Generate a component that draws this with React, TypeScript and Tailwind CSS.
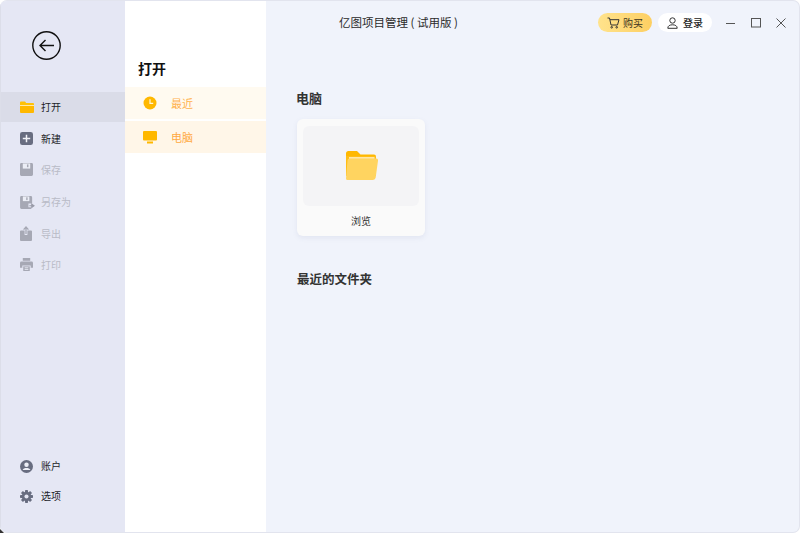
import React from "react";

const font = { fontFamily: '"Noto Sans CJK SC", "Liberation Sans", sans-serif' };

const FolderSmall = () => (
  <svg width="14" height="12" viewBox="0 0 14 12">
    <path d="M0 1.500A1 1 0 0 1 1 .5h4l1.200 1.500H13a1 1 0 0 1 1 1V4H0z" fill="#ffc107" />
    <path d="M0 4.600h14V11a1 1 0 0 1-1 1H1a1 1 0 0 1-1-1z" fill="#ffb800" />
    <rect x="0" y="4" width="14" height="1" fill="#ffe9a8" />
  </svg>
);
const Plus = () => (
  <svg width="13" height="13" viewBox="0 0 14 14">
    <rect width="14" height="14" rx="2.500" fill="#686d80" />
    <path d="M7 3v8M3 7h8" stroke="#f2f3f8" strokeWidth="1.600" />
  </svg>
);
const Save = () => (
  <svg width="13" height="13" viewBox="0 0 14 14">
    <path d="M1.500 0h11A1.500 1.500 0 0 1 14 1.500v11a1.500 1.500 0 0 1-1.500 1.500h-11A1.500 1.500 0 0 1 0 12.500v-11A1.500 1.500 0 0 1 1.500 0z" fill="#a6a8b4" />
    <rect x="3" y="0.500" width="8" height="5.500" fill="#eceef6" />
    <rect x="7.500" y="1.500" width="1.600" height="3" fill="#a6a8b4" />
  </svg>
);
const SaveAs = () => (
  <svg width="15" height="13" viewBox="0 0 16 14">
    <path d="M1.500 0h10A1.500 1.500 0 0 1 13 1.500V8H9v4H12v2H1.500A1.500 1.500 0 0 1 0 12.500v-11A1.500 1.500 0 0 1 1.500 0z" fill="#a6a8b4" />
    <rect x="3" y="0.500" width="7" height="5" fill="#eceef6" />
    <rect x="6.600" y="1.400" width="1.500" height="3" fill="#a6a8b4" />
    <path d="M10 10.500h3.500M12.600 8.800l2.400 1.700-2.400 1.700z" stroke="#9a9ca9" strokeWidth="1.200" fill="#9a9ca9" />
  </svg>
);
const Export = () => (
  <svg width="12" height="15" viewBox="0 0 12 15">
    <path d="M1 4.500h3.600V9h2.800V4.500H11a1 1 0 0 1 1 1V14a1 1 0 0 1-1 1H1a1 1 0 0 1-1-1V5.500a1 1 0 0 1 1-1z" fill="#a6a8b4" />
    <path d="M6 8V1.500M3.600 3.600 6 1l2.400 2.600" stroke="#a6a8b4" strokeWidth="1.300" fill="none" />
  </svg>
);
const Printer = () => (
  <svg width="13" height="13" viewBox="0 0 14 14">
    <path d="M3 0h8v3H3z" fill="#a6a8b4" />
    <path d="M1.500 3.800h11A1.500 1.500 0 0 1 14 5.300V10.500h-2.500V8h-9v2.500H0V5.300a1.500 1.500 0 0 1 1.500-1.500z" fill="#a6a8b4" />
    <path d="M3.500 9h7v5h-7z" fill="#a6a8b4" />
    <path d="M5 10.500h4M5 12.300h4" stroke="#eceef6" strokeWidth="0.900" />
  </svg>
);
const Account = () => (
  <svg width="13" height="13" viewBox="0 0 14 14">
    <circle cx="7" cy="7" r="7" fill="#686d80" />
    <circle cx="7" cy="5.200" r="2.400" fill="#eceef6" />
    <path d="M2.800 10.800C3.500 9 5 8.500 7 8.500s3.500.5 4.200 2.300z" fill="#eceef6" />
  </svg>
);
const Gear = () => (
  <svg width="13" height="13" viewBox="0 0 14 14">
    <g fill="#686d80">
      {[0, 45, 90, 135].map((a) => (
        <rect key={a} x="5.400" y="0" width="3.200" height="14" rx="0.800" transform={`rotate(${a} 7 7)`} />
      ))}
      <circle cx="7" cy="7" r="5" />
    </g>
    <circle cx="7" cy="7" r="2.200" fill="#e5e7f4" />
  </svg>
);
const Clock = () => (
  <svg width="14" height="14" viewBox="0 0 14 14">
    <circle cx="7" cy="7" r="6.500" fill="#ffb800" />
    <path d="M7 3.300V7.300h3.200" stroke="#fff6de" strokeWidth="1.200" fill="none" />
  </svg>
);
const Monitor = () => (
  <svg width="14" height="13" viewBox="0 0 14 13">
    <rect width="14" height="9.500" rx="1" fill="#ffb800" />
    <rect x="4" y="10.500" width="6" height="2" fill="#ffb800" />
  </svg>
);
const BigFolder = () => (
  <svg width="32" height="29" viewBox="0 0 32 29">
    <path d="M0 2.500A2.500 2.500 0 0 1 2.500 0h8.500l3.500 3.500H28a2 2 0 0 1 2 2V10H0z" fill="#ffb800" />
    <path d="M0 5h30v20H0z" fill="#ffbe16" />
    <path d="M3 6h25.500v6H3z" fill="#ffe6a6" />
    <path d="M3.500 7.500H30a2 2 0 0 1 2 2.300l-2.300 16.600A3 3 0 0 1 27 29H1.500a1.500 1.500 0 0 1-1.500-1.500L1.500 9.300a2 2 0 0 1 2-1.800z" fill="#ffd460" />
  </svg>
);

const Side = ({ icon, label, dim, active, className = "" }: { icon: React.ReactNode; label: string; dim?: boolean; active?: boolean; className?: string }) => (
  <div className={`flex items-center pl-[19px] ${active ? "bg-[#dadce8]" : ""} ${className}`}>
    <div className="flex w-[21px] shrink-0 items-center">{icon}</div>
    <span className={`text-[10px] leading-[14px] ${dim ? "text-[#b9bbc6]" : "text-[#1c1e28]"}`}>{label}</span>
  </div>
);

export default function App() {
  return (
    <div className="relative h-[533px] w-[800px]">
      <div className="flex h-full w-full overflow-hidden rounded-[7px] border-b border-r border-t border-[#e2e4ee] bg-[#f0f3fb]" style={font}>
        <aside className="flex w-[125px] shrink-0 flex-col border-l border-[#dcdee9] bg-[#e5e7f4]">
          <div className="flex h-[91px] items-start pl-[31px] pt-[30px]">
            <svg width="29" height="29" viewBox="0 0 29 29" fill="none" stroke="#111" strokeWidth="1.400">
              <circle cx="14.500" cy="14.500" r="13.700" />
              <path d="M22 14.500H8M13.500 9l-5.500 5.500 5.500 5.500" />
            </svg>
          </div>
          <Side active className="h-[30px]" icon={<FolderSmall />} label="打开" />
          <Side className="mt-[1px] h-[31px]" icon={<Plus />} label="新建" />
          <Side dim className="h-[31px]" icon={<Save />} label="保存" />
          <Side dim className="mt-[1px] h-[32px]" icon={<SaveAs />} label="另存为" />
          <Side dim className="h-[31px]" icon={<Export />} label="导出" />
          <Side dim className="h-[31px]" icon={<Printer />} label="打印" />
          <div className="mt-auto pb-[21px]">
            <Side className="h-[30px]" icon={<Account />} label="账户" />
            <Side className="h-[30px]" icon={<Gear />} label="选项" />
          </div>
        </aside>

        <nav className="flex w-[141px] shrink-0 flex-col bg-white">
          <h2 className="flex h-[86px] items-end pb-[9px] pl-[13px] text-[14px] font-bold leading-[20px] text-[#111]">打开</h2>
          <div className="flex h-[32px] items-center bg-[#fffaf0] pl-[18px]">
            <Clock />
            <span className="ml-[14px] text-[11px] text-[#ffb14d]">最近</span>
          </div>
          <div className="mt-[2px] flex h-[32px] items-center bg-[#fff6e8] pl-[18px]">
            <Monitor />
            <span className="ml-[14px] text-[11px] text-[#ffa940]">电脑</span>
          </div>
        </nav>

        <main className="flex min-w-0 flex-1 flex-col">
          <header className="flex h-[43px] items-center">
            <div className="w-[73px] shrink-0" />
            <div className="w-[120px] shrink-0 whitespace-pre text-[11.500px] text-[#2a2a2a]">亿图项目管理 ( 试用版 )</div>
            <div className="ml-[139px] flex h-[19px] w-[54px] items-center justify-center gap-[3px] rounded-full bg-gradient-to-r from-[#ffe38c] to-[#fdcf62] text-[10px] text-[#3a3320]">
              <svg width="13" height="12" viewBox="0 0 13 12" fill="none" stroke="#333" strokeWidth="1">
                <path d="M.5 1h2l1.500 7h6.500l1.500-5.300H3" />
                <circle cx="4.700" cy="10.300" r=".8" />
                <circle cx="9.700" cy="10.300" r=".8" />
              </svg>
              <span>购买</span>
            </div>
            <div className="ml-[6px] flex h-[19px] w-[54px] items-center justify-center gap-[5px] rounded-full bg-white text-[10px] font-medium text-[#222]">
              <svg width="11" height="12" viewBox="0 0 11 12" fill="none" stroke="#333" strokeWidth="1">
                <circle cx="5.500" cy="3.500" r="2.700" />
                <path d="M.8 11.300c0-2.500 2-3.500 4.700-3.500s4.700 1 4.700 3.500z" />
              </svg>
              <span>登录</span>
            </div>
            <div className="ml-[14px] flex items-center gap-[15px]">
              <svg width="10" height="10" viewBox="0 0 10 10" stroke="#555"><path d="M0 5.500h9" /></svg>
              <svg width="10" height="10" viewBox="0 0 10 10" fill="none" stroke="#555"><rect x=".5" y=".5" width="9" height="8.500" /></svg>
              <svg width="10" height="10" viewBox="0 0 10 10" stroke="#555"><path d="M.5.500l9 9M9.500.500l-9 9" /></svg>
            </div>
          </header>
          <section className="px-[30px] pt-[44px]">
            <h3 className="text-[13px] font-semibold leading-[20px] text-[#333]">电脑</h3>
            <div className="ml-[1px] mt-[11px] flex h-[117px] w-[128px] flex-col items-center rounded-md bg-[#fafafa] px-[6px] pt-[7px] shadow-[0_2px_5px_rgba(120,130,170,0.12)]">
              <div className="flex h-[80px] w-full items-center justify-center rounded-md bg-[#f4f4f6] pb-[1px] pl-[1px]">
                <BigFolder />
              </div>
              <span className="mt-[7px] text-[10px] leading-[15px] text-[#333]">浏览</span>
            </div>
            <h3 className="ml-[1px] mt-[33px] text-[12.500px] font-semibold leading-[20px] text-[#333]">最近的文件夹</h3>
          </section>
        </main>
      </div>
      <div className="absolute bottom-0 left-0 h-[4px] w-[4px] bg-[#333] [clip-path:polygon(0_0,100%_100%,0_100%)]" />
    </div>
  );
}
